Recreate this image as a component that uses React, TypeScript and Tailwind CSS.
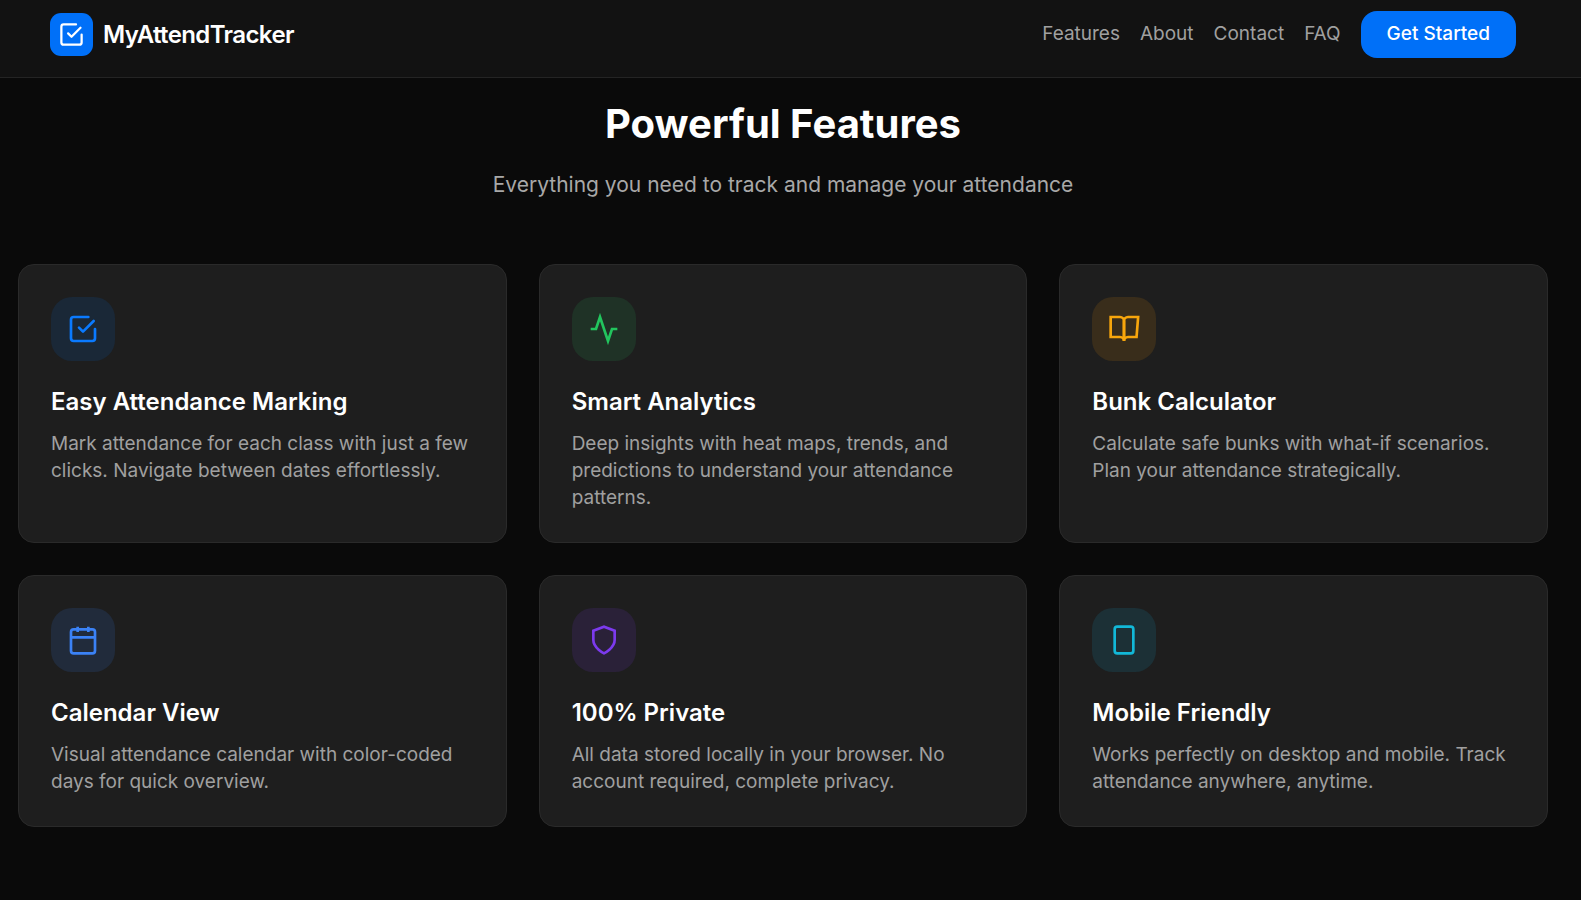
import React from "react";

const iconProps = {
  viewBox: "0 0 24 24",
  fill: "none",
  stroke: "currentColor",
  strokeWidth: 2,
  "aria-hidden": true,
};

const CheckIcon = ({ className = "size-8" }: { className?: string }) => (
  <svg {...iconProps} strokeLinecap="round" strokeLinejoin="round" className={className}>
    <path d="M9 11l3 3 8-8" />
    <path d="M21 12v7a2 2 0 0 1-2 2H5a2 2 0 0 1-2-2V5a2 2 0 0 1 2-2h11" />
  </svg>
);

const ActivityIcon = () => (
  <svg {...iconProps} className="size-8">
    <path d="M22 12h-4l-3 9L9 3l-3 9H2" />
  </svg>
);

const BookIcon = () => (
  <svg {...iconProps} className="size-8">
    <path d="M2 3h7a3 3 0 0 1 3 3v15a3 3 0 0 0-3-3H2z" />
    <path d="M22.6 3H15a3 3 0 0 0-3 3v15a3 3 0 0 1 3-3h6.4z" />
  </svg>
);

const CalendarIcon = () => (
  <svg {...iconProps} className="size-8">
    <rect x="3" y="4" width="18" height="18" rx="2" />
    <path d="M16 2v4M8 2v4M3 10h18" />
  </svg>
);

const ShieldIcon = () => (
  <svg {...iconProps} className="size-8">
    <path d="M12 22s8-4 8-10V5l-8-3-8 3v7c0 6 8 10 8 10z" />
  </svg>
);

const PhoneIcon = () => (
  <svg {...iconProps} className="size-8">
    <rect x="5" y="2" width="14" height="20" rx="2" />
  </svg>
);

const navLinks = ["Features", "About", "Contact", "FAQ"];

const features = [
  {
    icon: <CheckIcon />,
    color: "bg-[#1a2837] text-[#0a7aff]",
    title: "Easy Attendance Marking",
    text: "Mark attendance for each class with just a few clicks. Navigate between dates effortlessly.",
  },
  {
    icon: <ActivityIcon />,
    color: "bg-[#1f3226] text-[#22c55e]",
    title: "Smart Analytics",
    text: "Deep insights with heat maps, trends, and predictions to understand your attendance patterns.",
  },
  {
    icon: <BookIcon />,
    color: "bg-[#392d1b] text-[#f8a60c]",
    title: "Bunk Calculator",
    text: "Calculate safe bunks with what-if scenarios. Plan your attendance strategically.",
  },
  {
    icon: <CalendarIcon />,
    color: "bg-[#212b3b] text-[#3b82f6]",
    title: "Calendar View",
    text: "Visual attendance calendar with color-coded days for quick overview.",
  },
  {
    icon: <ShieldIcon />,
    color: "bg-[#2a2138] text-[#7c3aed]",
    title: "100% Private",
    text: "All data stored locally in your browser. No account required, complete privacy.",
  },
  {
    icon: <PhoneIcon />,
    color: "bg-[#1c3036] text-[#12b8d8]",
    title: "Mobile Friendly",
    text: "Works perfectly on desktop and mobile. Track attendance anywhere, anytime.",
  },
];

const Header = () => (
  <header className="flex items-start justify-between border-b border-[#242424] bg-[#121212] pt-[11px] pb-[19px] pl-[50px] pr-[65px]">
    <a href="#" className="flex h-[47px] items-center gap-[10px]">
      <span className="flex size-[43px] items-center justify-center rounded-[11px] bg-[#0070f8] text-white">
        <CheckIcon className="size-[27px]" />
      </span>
      <span className="text-2xl font-semibold tracking-tight text-white">MyAttendTracker</span>
    </a>
    <nav className="flex items-center gap-5 text-[19px] text-[#a0a0a0]">
      {navLinks.map((link) => (
        <a key={link} href={`#${link.toLowerCase()}`}>
          {link}
        </a>
      ))}
      <button className="h-[47px] rounded-2xl bg-[#0070f8] px-[26px] font-medium text-white">
        Get Started
      </button>
    </nav>
  </header>
);

const App = () => {
  return (
    <div className="min-h-screen bg-[#0a0a0a] font-['Inter',sans-serif]">
      <Header />
      <main id="features" className="pt-5 pb-16 pl-[18px] pr-[33px]">
        <div className="text-center">
          <h2 className="text-[40px] leading-[52px] font-bold text-white">Powerful Features</h2>
          <p className="mt-[17px] text-[21px] leading-9 text-[#a8a8a8]">
            Everything you need to track and manage your attendance
          </p>
        </div>
        <div className="mt-[61px] grid gap-8 md:grid-cols-3">
          {features.map((feature) => (
            <article
              key={feature.title}
              className="rounded-2xl border border-[#2a2a2a] bg-[#1e1e1e] px-8 pt-8 pb-[31px]"
            >
              <div className={`flex size-16 items-center justify-center rounded-[21px] ${feature.color}`}>
                {feature.icon}
              </div>
              <h3 className="mt-[25px] text-2xl font-semibold text-white">{feature.title}</h3>
              <p className="mt-3 text-[19px] leading-[27px] text-[#a0a0a0]">{feature.text}</p>
            </article>
          ))}
        </div>
      </main>
    </div>
  );
};

export default App;
